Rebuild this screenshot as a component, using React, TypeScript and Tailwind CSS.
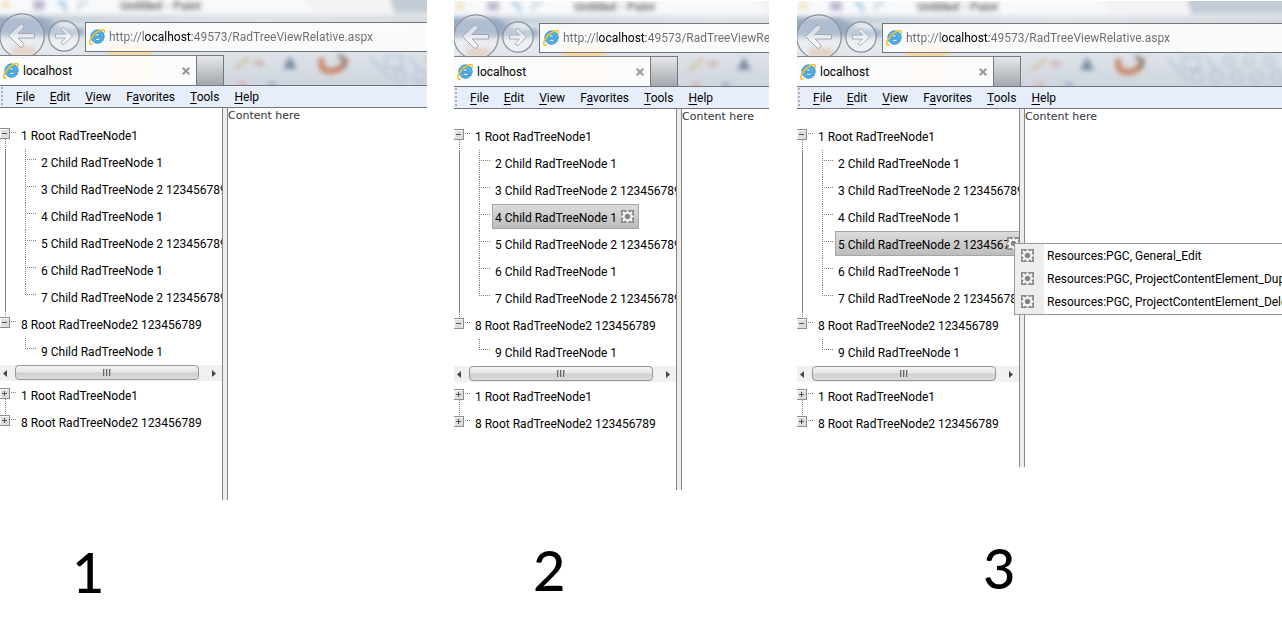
import { useState, type ReactNode } from 'react'
import clsx from 'clsx'

type TreeNode = { label: string; children?: string[] }

const NODES: TreeNode[] = [
  {
    label: '1 Root RadTreeNode1',
    children: [
      '2 Child RadTreeNode 1',
      '3 Child RadTreeNode 2 123456789',
      '4 Child RadTreeNode 1',
      '5 Child RadTreeNode 2 123456789',
      '6 Child RadTreeNode 1',
      '7 Child RadTreeNode 2 123456789',
    ],
  },
  { label: '8 Root RadTreeNode2 123456789', children: ['9 Child RadTreeNode 1'] },
]

// [before, access key, after]
const MENUS = [
  ['', 'F', 'ile'],
  ['', 'E', 'dit'],
  ['', 'V', 'iew'],
  ['F', 'a', 'vorites'],
  ['', 'T', 'ools'],
  ['', 'H', 'elp'],
]

const ACTIONS = [
  'Resources:PGC, General_Edit',
  'Resources:PGC, ProjectContentElement_Duplicate',
  'Resources:PGC, ProjectContentElement_Delete',
]

export default function App() {
  return (
    <main className="grid grid-cols-[minmax(0,427fr)_minmax(0,316fr)_minmax(0,487fr)] gap-x-[26px] overflow-hidden bg-white font-['Roboto',sans-serif] text-xs text-black">
      <Step caption="1" captionClass="pl-[72px] pt-[38px]">
        <Browser id="a" paneClass="pb-16" />
      </Step>
      <Step className="pl-px pt-px" caption="2" captionClass="pl-[79px] pt-[46px]">
        <Browser id="b" paneClass="pb-[53px]" selected={NODES[0].children![2]} />
      </Step>
      <Step className="pl-0.5 pt-px" caption="3" captionClass="pl-[186px] pt-[67px]">
        <Browser id="c" paneClass="pb-[30px]" selected={NODES[0].children![3]} />
        <ContextMenu />
      </Step>
    </main>
  )
}

function Step({
  children,
  className,
  caption,
  captionClass,
}: {
  children: ReactNode
  className?: string
  caption: string
  captionClass: string
}) {
  return (
    <section className={clsx('relative overflow-hidden', className)}>
      {children}
      <p className={clsx("font-['Lato',sans-serif] text-[56px] leading-[68px] font-medium", captionClass)}>{caption}</p>
    </section>
  )
}

function Browser({ id, paneClass, selected }: { id: string; paneClass: string; selected?: string }) {
  return (
    <div>
      <header className="relative h-[85px] overflow-hidden">
        <Glass id={id} />
        <div className="relative flex h-[55px] items-start">
          <button aria-label="Back" className="mt-[13px] -ml-px h-[46px] w-[46px] shrink-0">
            <svg viewBox="0 0 46 46" className="size-full">
              <circle cx="23" cy="23" r="22.2" fill="#fff" fillOpacity=".22" stroke="#8b9097" strokeWidth="1.2" />
              <path
                d="M9.500 22.500 L21 11.500 Q22.500 10.500 24.500 12.500 Q25.500 14 24.500 15 L19 20.500 H35.500 V25 H19 L24.500 30.500 Q25.500 32 24.500 33.500 Q22.500 35 21 34 Z"
                fill="#fff"
                fillOpacity=".55"
                stroke="#a3a8ae"
              />
            </svg>
          </button>
          <button aria-label="Forward" className="mt-5 ml-[3px] h-8 w-8 shrink-0">
            <svg viewBox="0 0 32 32" className="size-full">
              <circle cx="16" cy="16" r="15.2" fill="#fff" fillOpacity=".35" stroke="#8b9097" strokeWidth="1.2" />
              <path
                d="M24.500 16 L16.500 24 Q15 25 13.500 23.500 Q13 22.500 14 21.500 L17.500 18 H7.500 V14 H17.500 L14 10.500 Q13 9.500 13.500 8.500 Q15 7 16.500 8 Z"
                fill="#fff"
                fillOpacity=".5"
                stroke="#a9adb2"
              />
            </svg>
          </button>
          <label className="mt-[22px] ml-[5px] flex h-[30px] min-w-0 flex-1 items-center gap-1 border border-r-0 border-[#6f757c] bg-white/80 pl-[3px]">
            <IeLogo />
            <input
              aria-label="Address"
              defaultValue="http://localhost:49573/RadTreeViewRelative.aspx"
              className="min-w-0 flex-1 bg-[linear-gradient(90deg,#6d6d6d_35px,#000_35px,#000_83px,#6d6d6d_83px)] bg-clip-text text-xs text-transparent outline-none"
            />
          </label>
        </div>
        <div className="relative flex h-[30px]">
          <div className="flex w-[196px] shrink-0 items-center gap-1 border-t border-[#7d8289] bg-white/90 pl-[3px] pr-1.5">
            <IeLogo />
            <span className="flex-1">localhost</span>
            <button aria-label="Close tab">
              <svg viewBox="0 0 8 8" className="size-2" stroke="#999" strokeWidth="2">
                <path d="M.7 .7 7.300 7.300 M7.300 .7 .7 7.300" />
              </svg>
            </button>
          </div>
          <button
            aria-label="New tab"
            className="w-7 shrink-0 border border-b-0 border-[#75797f] bg-linear-to-b from-[#e6e8ea] to-[#a4a7ac]"
          />
        </div>
      </header>

      <nav className="flex h-[23px] items-center gap-[15px] overflow-hidden border-y border-[#70747c] bg-[#e7eefa]">
        <svg viewBox="0 0 3 19" className="-mr-0.5 h-[19px] w-[3px] shrink-0">
          <path d="M2 0V19" stroke="#a9b2c0" strokeWidth="2" strokeDasharray="2 2" />
        </svg>
        {MENUS.map(([before, key, after]) => (
          <button key={key}>
            {before}
            <span className="underline underline-offset-2">{key}</span>
            {after}
          </button>
        ))}
      </nav>

      <div className="flex">
        <div className={clsx('w-[222px] shrink-0 overflow-hidden pt-3.5', paneClass)}>
          <Tree selected={selected} open />
          <ScrollBar />
          <div className="pt-px">
            <Tree />
          </div>
        </div>
        <div className="w-1.5 shrink-0 border-x border-[#858585] bg-[#ececec]" />
        <p className="font-['DejaVu_Sans',sans-serif] text-[11px] leading-4 text-[#333]">Content here</p>
      </div>
    </div>
  )
}

function Tree({ open = false, selected }: { open?: boolean; selected?: string }) {
  const [toggled, setToggled] = useState<Record<string, boolean>>({})
  const isOpen = (n: TreeNode) => open !== !!toggled[n.label]

  return (
    <ul>
      {NODES.map((n, i) => (
        <li key={n.label}>
          <div className="flex h-[27px] items-center">
            <button
              aria-label={isOpen(n) ? 'Collapse' : 'Expand'}
              aria-expanded={isOpen(n)}
              onClick={() => setToggled((c) => ({ ...c, [n.label]: !c[n.label] }))}
            >
              <Toggle open={isOpen(n)} first={i === 0} />
            </button>
            <span className="whitespace-nowrap">{n.label}</span>
          </div>
          {isOpen(n) && (
            <ul>
              {n.children?.map((c, j) => (
                <li key={c} className="flex h-[27px]">
                  <Guide trunk={i === 0} last={j === n.children!.length - 1} />
                  {c === selected ? (
                    <SelectedNode label={c} />
                  ) : (
                    <span className="self-center pl-[3px] whitespace-nowrap">{c}</span>
                  )}
                </li>
              ))}
            </ul>
          )}
        </li>
      ))}
    </ul>
  )
}

function SelectedNode({ label }: { label: string }) {
  const long = label.length > 25
  return (
    <span
      className={clsx(
        'flex h-[25px] shrink-0 items-center border border-[#a6a6a6] bg-linear-to-b from-[#dcdcdc] to-[#bcbcbc] pl-0.5 whitespace-nowrap',
        long ? 'w-[190px]' : 'pr-1',
      )}
    >
      <span className={clsx('pt-0.5', long && 'w-[169px] shrink-0 overflow-hidden')}>{label}</span>
      <span className={clsx('shrink-0', !long && 'pl-1')}>
        <Gear />
      </span>
    </span>
  )
}

function Toggle({ open, first }: { open: boolean; first: boolean }) {
  return (
    <svg viewBox="0 0 21 27" className="h-[27px] w-[21px] shrink-0" fill="none" shapeRendering="crispEdges">
      <path d={first ? 'M5.500 17V27' : 'M5.500 0V6'} stroke="#808080" strokeDasharray="1 1" />
      <path d="M11 10.500H17" stroke="#808080" strokeDasharray="1 1" />
      <rect x="-.5" y="6.500" width="10" height="10" fill="#dedede" stroke="#8e8e8e" />
      <path d="M0 7.500H9M.5 7V16" stroke="#fafafa" />
      <path d={open ? 'M2 11.500H7' : 'M2 11.500H7M4.500 9V14'} stroke="#555" />
    </svg>
  )
}

function Guide({ trunk, last }: { trunk: boolean; last: boolean }) {
  return (
    <svg viewBox="0 0 38 27" className="h-[27px] w-[38px] shrink-0" stroke="#808080" shapeRendering="crispEdges">
      {trunk && <path d="M5.500 0V27" />}
      <path d={last ? 'M25.500 0V11' : 'M25.500 0V27'} strokeDasharray="1 1" />
      <path d="M27 10.500H37" strokeDasharray="1 1" />
    </svg>
  )
}

function ScrollBar() {
  return (
    <div className="flex h-4 items-stretch bg-[#f0f0f0]">
      <button aria-label="Scroll left" className="flex w-[15px] items-center pl-[3px]">
        <svg viewBox="0 0 4 7" className="h-[7px] w-1">
          <path d="M4 0V7L0 3.500Z" fill="#444" />
        </svg>
      </button>
      <div className="flex h-[15px] w-[184px] items-center justify-center rounded-sm border border-[#979797] bg-[linear-gradient(#f3f3f3,#e6e6e6_48%,#cfcfcf_52%,#dcdcdc)]">
        <svg viewBox="0 0 8 7" className="h-[7px] w-2" shapeRendering="crispEdges">
          <path d="M1 0V7M4 0V7M7 0V7" stroke="#666" strokeWidth="2" />
          <path d="M1.500 0V7M4.500 0V7M7.500 0V7" stroke="#bbb" />
        </svg>
      </div>
      <button aria-label="Scroll right" className="flex flex-1 items-center justify-end pr-1.5">
        <svg viewBox="0 0 4 7" className="h-[7px] w-1">
          <path d="M0 0V7L4 3.500Z" fill="#444" />
        </svg>
      </button>
    </div>
  )
}

function ContextMenu() {
  return (
    <ul className="absolute top-[243px] left-[219px] w-[340px] border border-[#979797] bg-[linear-gradient(90deg,#ededed_29px,#fff_29px)] pb-px">
      {ACTIONS.map((a) => (
        <li key={a}>
          <button className="flex h-[23px] items-center gap-[13px] pl-1.5 whitespace-nowrap">
            <Gear />
            {a}
          </button>
        </li>
      ))}
    </ul>
  )
}

function Gear() {
  return (
    <svg viewBox="0 0 13 13" className="size-[13px] shrink-0">
      <rect width="13" height="13" fill="#8a8a8a" />
      <g stroke="#fff" strokeWidth="2">
        <path d="M6.500 .5V12.500M.5 6.500H12.500M2 2 11 11M11 2 2 11" />
      </g>
      <circle cx="6.500" cy="6.500" r="4.600" fill="#fff" />
      <circle cx="6.500" cy="6.500" r="2.800" fill="#858585" />
    </svg>
  )
}

function IeLogo() {
  return (
    <svg viewBox="0 0 16 16" className="size-4 shrink-0" fill="none">
      <path
        d="M15 9.300H5.800a3 3 0 0 0 5.200 1.300h3.500A6.700 6.700 0 1 1 15 9.300ZM5.700 6.900H11a2.700 2.700 0 0 0-5.300 0Z"
        fill="#4fb4e8"
        stroke="#1c78bd"
        strokeWidth=".7"
        fillRule="evenodd"
      />
      <path d="M3.600 14.700C-.5 16.700-.2 11.800 4 6.700 8 2 13.600-.6 15 1.200c.6.800.3 2-.2 3" stroke="#f5c02a" strokeWidth="1.500" />
    </svg>
  )
}

// blurred desktop seen through the title bar
function Glass({ id }: { id: string }) {
  return (
    <svg className="absolute inset-0 size-full" aria-hidden="true">
      <defs>
        <linearGradient id={`${id}-low`} x1="0" y1="0" x2="0" y2="1">
          <stop offset="0" stopColor="#eef1f5" />
          <stop offset=".65" stopColor="#dde2e9" />
          <stop offset="1" stopColor="#cfd5dd" />
        </linearGradient>
        <linearGradient id={`${id}-band`} x1="0" y1="0" x2="1" y2="0">
          <stop offset="0" stopColor="#b4bfce" />
          <stop offset=".25" stopColor="#d2d8e0" />
          <stop offset=".5" stopColor="#dfe3e8" />
          <stop offset="1" stopColor="#cfd4da" />
        </linearGradient>
        <filter id={`${id}-soft`} x="-20%" y="-50%" width="140%" height="200%">
          <feGaussianBlur stdDeviation="2.500" />
        </filter>
      </defs>
      <rect width="100%" height="100%" fill={`url(#${id}-low)`} />
      <g filter={`url(#${id}-soft)`}>
        <rect x="-10" y="-10" width="540" height="23" fill="#f8f9fa" />
        <path d="M300-10H400V12H312Z" fill="#f3f3f5" />
        <path d="M388-10H530V13H394Z" fill="#c2ccd4" />
        <rect x="-10" y="16" width="540" height="8" fill={`url(#${id}-band)`} />
        <path d="M-5 16H42L62 28H85V36H-5Z" fill="#99abc3" />
        <rect x="-5" y="40" width="90" height="14" fill="#e4e8ee" />
        <rect x="12" y="47" width="24" height="8" fill="#dcc3b0" />
        <rect x="109" y="44" width="42" height="40" fill="#f6d9a0" />
        <path d="M2 5H10" stroke="#f3dcae" strokeWidth="6" />
        <path d="M33 0V10H45V0" fill="#c0b6d4" />
        <path d="M58 2Q66 2 65 11" stroke="#7dbbe2" strokeWidth="3" fill="none" />
        <path d="M88 2Q76 2 79 10" stroke="#c0cfdd" strokeWidth="3" fill="none" />
        <path d="M235 69 249 58" stroke="#cfc193" strokeWidth="3" />
        <path d="M254 63H264" stroke="#d3b0b2" strokeWidth="5" />
        <path d="M283 69 290 56 297 69Z" fill="#7b8aa0" />
        <path d="M322 58Q318 72 333 71Q346 68 345 58" stroke="#c98669" strokeWidth="6" fill="none" />
        <path d="M338 56Q350 58 342 68" stroke="#8d837d" strokeWidth="4" fill="none" />
        <path d="M238 84H246" stroke="#dcaaa2" strokeWidth="4" />
        <path d="M268 84H276" stroke="#8fa8c8" strokeWidth="4" />
        <text x="120" y="10" fontSize="12" fontWeight="700" fill="#444">
          Untitled - Paint
        </text>
      </g>
      <g stroke="#a3b8cd" strokeWidth="2" fill="none" opacity=".75" filter={`url(#${id}-soft)`}>
        <path d="M370 56 390 80M386 56H402V68H386ZM408 56 420 70" />
        <circle cx="400" cy="76" r="6" />
        <circle cx="420" cy="76" r="6" />
        <circle cx="440" cy="76" r="6" />
        <circle cx="460" cy="76" r="6" />
        <circle cx="480" cy="76" r="6" />
        <circle cx="432" cy="60" r="5" />
        <circle cx="452" cy="60" r="5" />
        <circle cx="472" cy="60" r="5" />
      </g>
    </svg>
  )
}
